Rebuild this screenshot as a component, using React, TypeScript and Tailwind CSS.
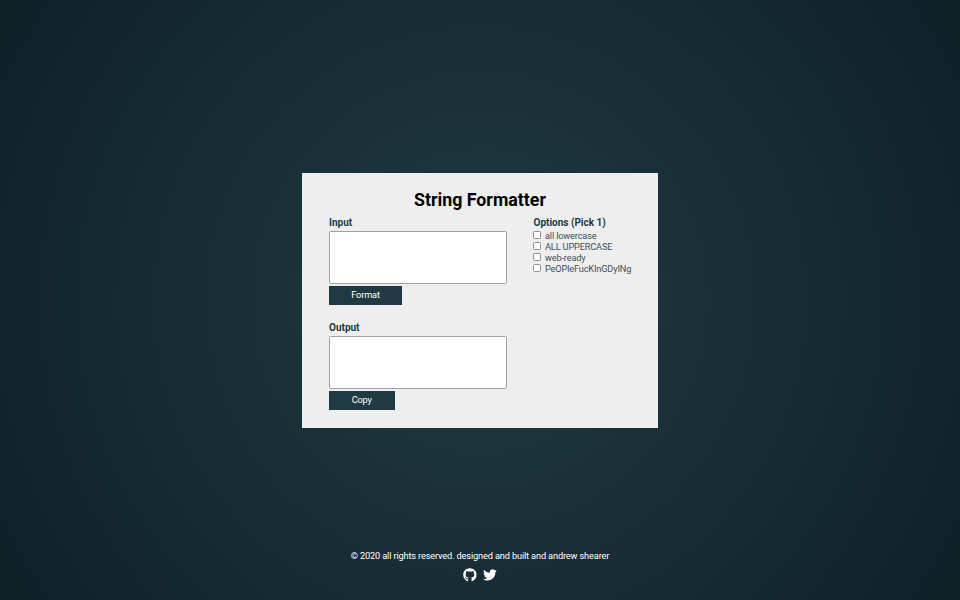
import { useState } from "react";
import { FaGithub, FaTwitter } from "react-icons/fa";

const options = ["all lowercase", "ALL UPPERCASE", "web-ready", "PeOPleFucKInGDyINg"];

function Field({ label, action, width }: { label: string; action: string; width: string }) {
  return (
    <div className="flex h-[105px] flex-col items-start">
      <label className="h-[16px] text-[10px] leading-[15px] font-bold text-[#203a43]">{label}</label>
      <textarea
        aria-label={label}
        className="block h-[53px] w-[178px] shrink-0 resize-none rounded-[1.5px] border border-[#a0a0a0] bg-white p-1 text-[9px] outline-none"
      />
      <button className={`mt-[2px] h-[19px] shrink-0 bg-[#203a43] pb-px text-center text-[9.2px] leading-[18px] tracking-[-0.135px] text-white ${width}`}>
        {action}
      </button>
    </div>
  );
}

export default function App() {
  const [picked, setPicked] = useState<number | null>(null);
  return (
    <div className="flex h-[600px] w-[960px] flex-col items-center overflow-hidden bg-[radial-gradient(circle_at_center,#203a43,#0f2027)] pt-[173px] font-['Roboto',sans-serif]">
      <main className="h-[255px] w-[356px] shrink-0 bg-[#eeeeee] pt-[16px] pl-[27px]">
        <h1 className="mr-[27px] h-[22px] text-center text-[17.8px] leading-[22px] font-bold text-black">String Formatter</h1>
        <div className="mt-[4px] flex">
          <div className="w-[204.5px]">
            <Field label="Input" action="Format" width="w-[73px]" />
            <Field label="Output" action="Copy" width="w-[65.5px]" />
          </div>
          <div>
            <h2 className="h-[15px] text-[10px] leading-[15px] font-bold whitespace-nowrap text-[#203a43]">Options (Pick 1)</h2>
            {options.map((option, i) => (
              <label key={option} className="flex h-[11px] items-center text-[9.2px] leading-[11px] tracking-[-0.15px] whitespace-nowrap text-[#3a535c]">
                <input
                  type="checkbox"
                  checked={picked === i}
                  onChange={() => setPicked(picked === i ? null : i)}
                  className="mr-[4px] -ml-[0.5px] mb-px size-[8px] appearance-none rounded-[1.5px] border border-[#8f8f8f] bg-white checked:bg-[#203a43]"
                />
                {option}
              </label>
            ))}
          </div>
        </div>
      </main>
      <footer className="mt-[121px] flex flex-col items-center text-white">
        <p className="h-[14px] text-[9.2px] leading-[14px] tracking-[-0.135px] whitespace-nowrap">© 2020 all rights reserved. designed and built and andrew shearer</p>
        <div className="mt-[5px] flex gap-[6.5px]">
          <FaGithub size={13.8} />
          <FaTwitter size={13.8} />
        </div>
      </footer>
    </div>
  );
}
